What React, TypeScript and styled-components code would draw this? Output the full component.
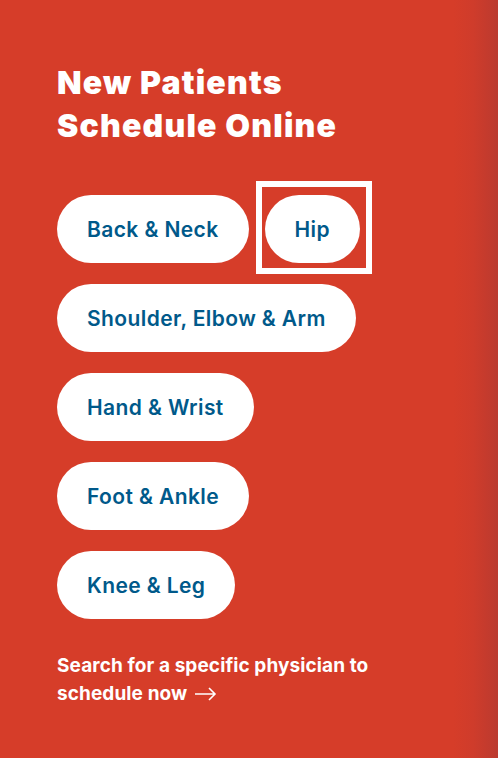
import React from "react";
import styled, { createGlobalStyle } from "styled-components";

const GlobalStyle = createGlobalStyle`
  html, body {
    margin: 0;
    padding: 0;
    height: 100%;
  }
  body {
    background: linear-gradient(to right, #d63d29 0%, #d63d29 91%, #cf3c2b 95%, #bb3a2f 100%);
    font-family: Inter, "Liberation Sans", Arial, sans-serif;
  }
`;

const Panel = styled.section`
  box-sizing: border-box;
  width: 498px;
  min-height: 758px;
  padding: 61px 0 0 57px;
`;

const Title = styled.h2`
  margin: 0 0 48px;
  color: #ffffff;
  font-size: 32px;
  font-weight: 900;
  line-height: 43px;
  letter-spacing: 1.2px;
`;

const ButtonList = styled.ul`
  list-style: none;
  margin: 0;
  padding: 0;
  display: flex;
  flex-wrap: wrap;
  column-gap: 16px;
  row-gap: 21px;
  width: 380px;
`;

const Item = styled.li<{ $full?: boolean }>`
  flex-basis: ${(p) => (p.$full ? "100%" : "auto")};
`;

const Pill = styled.a<{ $focused?: boolean }>`
  position: relative;
  box-sizing: border-box;
  display: inline-flex;
  align-items: center;
  height: 68px;
  padding: 0 30px;
  border-radius: 34px;
  background: #ffffff;
  color: #00598a;
  font-size: 21px;
  font-weight: 600;
  letter-spacing: 0.4px;
  text-decoration: none;
  cursor: pointer;

  ${(p) =>
    p.$focused &&
    `
    &::after {
      content: "";
      position: absolute;
      left: -9px;
      right: -12px;
      top: -14px;
      bottom: -11px;
      border: 6px solid #ffffff;
    }
  `}
`;

const Footer = styled.a`
  display: block;
  margin-top: 33px;
  width: 340px;
  color: #ffffff;
  font-size: 19px;
  font-weight: 700;
  line-height: 28px;
  letter-spacing: 0.1px;
  text-decoration: none;
`;

const Arrow = styled.svg`
  display: inline-block;
  width: 22px;
  height: 14px;
  margin-left: 8px;
  vertical-align: -1px;
`;

const specialties = [
  { label: "Back & Neck" },
  { label: "Hip", focused: true },
  { label: "Shoulder, Elbow & Arm", full: true },
  { label: "Hand & Wrist", full: true },
  { label: "Foot & Ankle", full: true },
  { label: "Knee & Leg", full: true },
];

const App: React.FC = () => {
  return (
    <>
      <GlobalStyle />
      <Panel>
        <Title>
          New Patients
          <br />
          Schedule Online
        </Title>
        <ButtonList>
          {specialties.map((s) => (
            <Item key={s.label} $full={s.full}>
              <Pill $focused={s.focused}>{s.label}</Pill>
            </Item>
          ))}
        </ButtonList>
        <Footer>
          Search for a specific physician to schedule now
          <Arrow viewBox="0 0 22 14" fill="none" stroke="#ffffff" strokeWidth="1.6">
            <path d="M0 7h20M14 1l6 6-6 6" />
          </Arrow>
        </Footer>
      </Panel>
    </>
  );
};

export default App;
